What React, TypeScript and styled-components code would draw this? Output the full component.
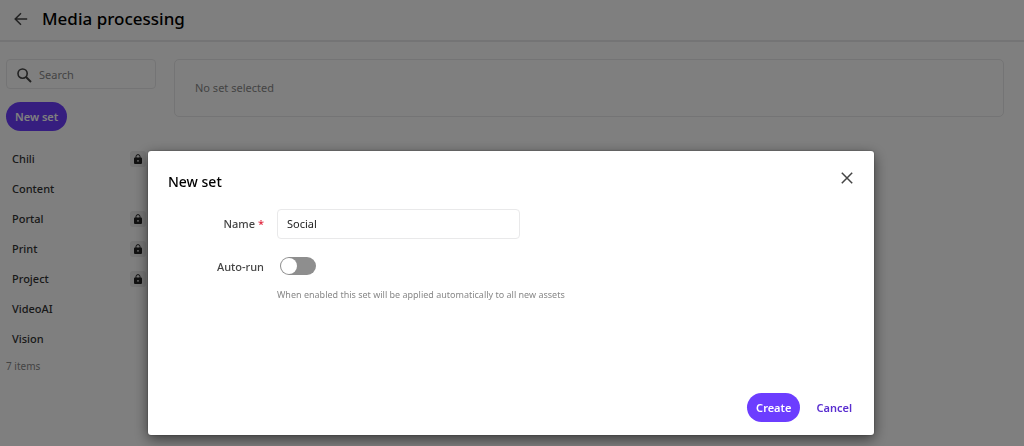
import React, { useState } from "react";
import styled, { createGlobalStyle } from "styled-components";

const GlobalStyle = createGlobalStyle`
  *, *::before, *::after { box-sizing: border-box; }
  body {
    margin: 0;
    background: #fff;
    color: #333;
    font-family: "Segoe UI", "Noto Sans", "Open Sans", sans-serif;
    font-size: 11px;
    line-height: 16px;
    overflow: hidden;
  }
  button, input { font: inherit; color: inherit; }
`;

const Page = styled.div`
  min-height: 100vh;
`;

const Header = styled.header`
  display: flex;
  align-items: center;
  gap: 14px;
  height: 42px;
  padding: 0 14px 3px;
  border-bottom: 2px solid #e9e9ea;
`;

const IconButton = styled.button`
  display: flex;
  align-items: center;
  justify-content: center;
  padding: 0;
  border: 0;
  background: none;
  color: #444;
  cursor: pointer;
`;

const PageTitle = styled.h1`
  margin: 0;
  color: #000;
  font-size: 17px;
  font-weight: 500;
  line-height: 25px;
`;

const Columns = styled.div`
  display: flex;
  align-items: flex-start;
  gap: 18px;
  padding: 17px 20px 0 6px;
`;

const Sidebar = styled.aside`
  flex: 0 0 150px;
  min-width: 0;
`;

const SearchBox = styled.label`
  display: flex;
  align-items: center;
  gap: 7px;
  height: 30px;
  padding: 2px 10px 0;
  border: 1px solid #e9e9ea;
  border-radius: 4px;
  color: #444;
`;

const SearchInput = styled.input`
  flex: 1;
  min-width: 0;
  padding: 0;
  border: 0;
  outline: 0;
  background: none;
  &::placeholder { color: #888; opacity: 1; }
`;

const Button = styled.button<{ $primary?: boolean }>`
  height: 29px;
  padding: 0 ${(p) => (p.$primary ? 9 : 2)}px;
  border: 0;
  border-radius: 15px;
  background: ${(p) => (p.$primary ? "#6c3dff" : "none")};
  color: ${(p) => (p.$primary ? "#fff" : "#5a2fd0")};
  font-weight: 600;
  cursor: pointer;
`;

const NewSetRow = styled.div`
  display: flex;
  padding-top: 13px;
`;

const SetList = styled.ul`
  margin: 13px 0 4px;
  padding: 0;
  list-style: none;
`;

const SetRow = styled.li`
  display: flex;
  align-items: center;
  justify-content: space-between;
  height: 30px;
  padding: 0 10px 0 6px;
  font-weight: 500;
`;

const LockBadge = styled.span`
  display: flex;
  align-items: center;
  justify-content: center;
  width: 16px;
  height: 16px;
  border-radius: 3px;
  background: #ececec;
  color: #222;
`;

const Count = styled.p`
  margin: 0;
  color: #888;
  font-size: 10px;
`;

const EmptyPanel = styled.main`
  flex: 1;
  padding: 20px;
  border: 1px solid #e9e9ea;
  border-radius: 5px;
  color: #888;
`;

const Backdrop = styled.div`
  position: fixed;
  inset: 0;
  display: flex;
  align-items: flex-start;
  justify-content: center;
  padding: 151px 24px 11px 22px;
  background: rgba(0, 0, 0, 0.5);
`;

const Dialog = styled.form`
  display: flex;
  flex-direction: column;
  width: 100%;
  max-width: 726px;
  padding: 18px 20px 13px;
  border-radius: 3px;
  background: #fff;
  box-shadow: 0 4px 14px rgba(0, 0, 0, 0.55), 0 0 2px rgba(0, 0, 0, 0.4);
`;

const DialogHeader = styled.div`
  display: flex;
  align-items: flex-start;
  justify-content: space-between;
`;

const DialogTitle = styled.h2`
  margin: 0;
  color: #000;
  font-size: 14px;
  font-weight: 500;
  line-height: 26px;
`;

const CloseButton = styled(IconButton)`
  width: 14px;
  height: 16px;
  margin-top: 1px;
`;

const Fields = styled.div`
  display: grid;
  grid-template-columns: 96px minmax(0, 1fr);
  column-gap: 13px;
  row-gap: 13px;
  min-height: 184px;
  padding-top: 14px;
  align-content: start;
`;

const FieldLabel = styled.label`
  padding-top: 7px;
  color: #444;
  font-weight: 500;
  text-align: right;
`;

const Required = styled.span`
  color: #e0243c;
`;

const TextInput = styled.input`
  width: 100%;
  max-width: 243px;
  height: 30px;
  padding: 0 9px 1px;
  border: 1px solid #e9e9ea;
  border-radius: 4px;
  outline: 0;
  background: #fff;
  color: #222;
`;

const Switch = styled.input`
  appearance: none;
  display: block;
  width: 36px;
  height: 18px;
  margin: 5px 3px 13px;
  padding: 1px;
  border-radius: 9px;
  background: #8e8e8e;
  cursor: pointer;
  &::before {
    content: "";
    display: block;
    width: 16px;
    height: 16px;
    border-radius: 50%;
    background: #fff;
  }
  &:checked { background: #6c3dff; }
  &:checked::before { margin-left: auto; }
`;

const Hint = styled.p`
  margin: 0;
  color: #888;
  font-size: 9px;
  line-height: 14px;
`;

const Actions = styled.div`
  display: flex;
  justify-content: flex-end;
  gap: 14px;
  padding: 14px 0 0;
`;

const sets = [
  { name: "Chili", locked: true },
  { name: "Content", locked: false },
  { name: "Portal", locked: true },
  { name: "Print", locked: true },
  { name: "Project", locked: true },
  { name: "VideoAI", locked: false },
  { name: "Vision", locked: false },
];

const BackIcon = () => (
  <svg width="14" height="14" viewBox="0 0 14 14" fill="none" stroke="currentColor" strokeWidth="1.5" aria-hidden="true">
    <path d="M13.200 7H1.200M7 1.200L1.200 7L7 12.800" />
  </svg>
);

const SearchIcon = () => (
  <svg width="15" height="15" viewBox="0 0 15 15" fill="none" stroke="currentColor" strokeWidth="1.6" aria-hidden="true">
    <circle cx="5.6" cy="5.6" r="4.6" />
    <path d="M9 9L14 14" strokeWidth="2" />
  </svg>
);

const LockIcon = () => (
  <svg width="8" height="10" viewBox="0 0 8 10" aria-hidden="true">
    <path d="M2 4V2.6a2 2 0 0 1 4 0V4" fill="none" stroke="currentColor" strokeWidth="1" />
    <path
      fill="currentColor"
      fillRule="evenodd"
      d="M1 3.6h6a1 1 0 0 1 1 1V9a1 1 0 0 1-1 1H1a1 1 0 0 1-1-1V4.6a1 1 0 0 1 1-1ZM4 5.900a.9.9 0 1 0 0 1.800a.9.9 0 1 0 0-1.800Z"
    />
  </svg>
);

const CloseIcon = () => (
  <svg width="12" height="12" viewBox="0 0 12 12" fill="none" stroke="currentColor" strokeWidth="1.5" aria-hidden="true">
    <path d="M0.800 0.800L11.200 11.200M11.200 0.800L0.800 11.200" />
  </svg>
);

export default function App() {
  const [name, setName] = useState("Social");
  const [autoRun, setAutoRun] = useState(false);

  return (
    <>
      <GlobalStyle />
      <Page>
        <Header>
          <IconButton type="button" aria-label="Back">
            <BackIcon />
          </IconButton>
          <PageTitle>Media processing</PageTitle>
        </Header>
        <Columns>
          <Sidebar>
            <SearchBox>
              <SearchIcon />
              <SearchInput type="text" placeholder="Search" aria-label="Search" />
            </SearchBox>
            <NewSetRow>
              <Button type="button" $primary>New set</Button>
            </NewSetRow>
            <SetList>
              {sets.map((set) => (
                <SetRow key={set.name}>
                  {set.name}
                  {set.locked && (
                    <LockBadge>
                      <LockIcon />
                    </LockBadge>
                  )}
                </SetRow>
              ))}
            </SetList>
            <Count>{sets.length} items</Count>
          </Sidebar>
          <EmptyPanel>No set selected</EmptyPanel>
        </Columns>
      </Page>
      <Backdrop>
        <Dialog role="dialog" aria-modal="true" aria-labelledby="dialog-title" onSubmit={(e) => e.preventDefault()}>
          <DialogHeader>
            <DialogTitle id="dialog-title">New set</DialogTitle>
            <CloseButton type="button" aria-label="Close">
              <CloseIcon />
            </CloseButton>
          </DialogHeader>
          <Fields>
            <FieldLabel htmlFor="set-name">
              Name <Required>*</Required>
            </FieldLabel>
            <TextInput id="set-name" type="text" required value={name} onChange={(e) => setName(e.target.value)} />
            <FieldLabel htmlFor="auto-run">Auto-run</FieldLabel>
            <div>
              <Switch
                id="auto-run"
                type="checkbox"
                role="switch"
                aria-describedby="auto-run-hint"
                checked={autoRun}
                onChange={(e) => setAutoRun(e.target.checked)}
              />
              <Hint id="auto-run-hint">When enabled this set will be applied automatically to all new assets</Hint>
            </div>
          </Fields>
          <Actions>
            <Button type="submit" $primary>Create</Button>
            <Button type="button">Cancel</Button>
          </Actions>
        </Dialog>
      </Backdrop>
    </>
  );
}
